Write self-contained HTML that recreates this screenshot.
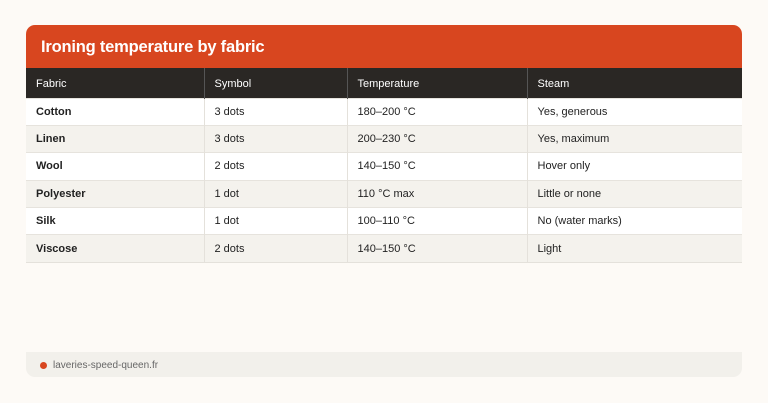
<!DOCTYPE html>
<html><head><style>
*{margin:0;padding:0;box-sizing:border-box}
body{width:768px;height:403px;background:#fdfaf6;font-family:"Liberation Sans",sans-serif;position:relative;overflow:hidden}
.hd{position:absolute;left:26px;top:25px;width:716px;height:43px;background:#d8461f;border-radius:9px 9px 0 0;color:#fff;font-weight:bold;font-size:16.5px;padding:13px 0 0 15px;letter-spacing:-0.2px}
table{position:absolute;left:26px;top:68px;width:716px;border-collapse:collapse;font-size:11px;color:#222}
th{background:#2a2724;color:#fff;font-weight:normal;text-align:left;height:30px;padding-left:10px;padding-top:2px;border-left:1px solid #555}
td{height:27.4px;padding-left:10px;border-left:1px solid #e4e1db;border-top:1px solid #e6e3dd}
th:first-child,td:first-child{border-left:none}
td:first-child{font-weight:bold}
tr:nth-child(even) td{background:#fff}
tr:nth-child(odd) td{background:#f4f2ed}
tr:last-child td{border-bottom:1px solid #e4e1db}
.ft{position:absolute;left:26px;top:352px;width:716px;height:25px;background:#f2f0eb;border-radius:0 0 9px 9px;font-size:10px;color:#666;padding:8px 0 0 27px}
.dot{position:absolute;left:14px;top:10px;width:7px;height:7px;border-radius:50%;background:#d8461f}
</style></head><body>
<div class="hd">Ironing temperature by fabric</div>
<table>
<tr><th style="width:178px">Fabric</th><th style="width:143px">Symbol</th><th style="width:180px">Temperature</th><th>Steam</th></tr>
<tr><td>Cotton</td><td>3 dots</td><td>180–200 °C</td><td>Yes, generous</td></tr>
<tr><td>Linen</td><td>3 dots</td><td>200–230 °C</td><td>Yes, maximum</td></tr>
<tr><td>Wool</td><td>2 dots</td><td>140–150 °C</td><td>Hover only</td></tr>
<tr><td>Polyester</td><td>1 dot</td><td>110 °C max</td><td>Little or none</td></tr>
<tr><td>Silk</td><td>1 dot</td><td>100–110 °C</td><td>No (water marks)</td></tr>
<tr><td>Viscose</td><td>2 dots</td><td>140–150 °C</td><td>Light</td></tr>
</table>
<div class="ft"><span class="dot"></span>laveries-speed-queen.fr</div>
</body></html>
